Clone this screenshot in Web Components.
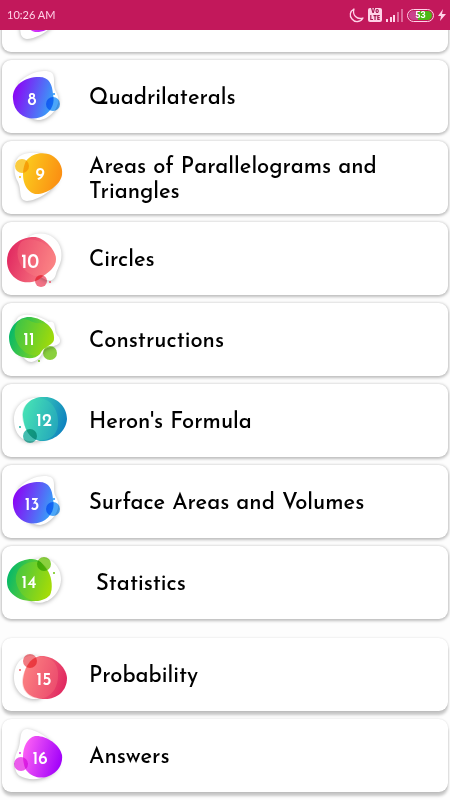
<!DOCTYPE html>
<html lang="en">
<head>
<meta charset="utf-8">
<meta name="viewport" content="width=device-width, initial-scale=1">
<title>Chapters</title>
<style>
    body {
        display: flex;
        flex-direction: column;
        height: 100vh;
        margin: 0;
        background: #fdfdfd;
        color: #000;
        font-family: "Josefin Sans", Lato, sans-serif;
    }
    main {
        flex: 1;
        min-height: 0;
        overflow: hidden auto;
        scrollbar-width: none;
    }
</style>
</head>
<body>
<status-bar><span slot="time">10:26 AM</span><span slot="battery">53</span></status-bar>

<main>
    <chapter-list>
        <chapter-card shape="low" tone="purple" number=""></chapter-card>
        <chapter-card shape="right" tone="blue" number="8">Quadrilaterals</chapter-card>
        <chapter-card shape="low" tone="orange" number="9">Areas of Parallelograms and Triangles</chapter-card>
        <chapter-card shape="wide" tone="red" number="10">Circles</chapter-card>
        <chapter-card shape="splash" tone="green" number="11">Constructions</chapter-card>
        <chapter-card shape="double" tone="teal" number="12">Heron's Formula</chapter-card>
        <chapter-card shape="right" tone="blue" number="13">Surface Areas and Volumes</chapter-card>
        <chapter-card shape="round" tone="green" number="14">&nbsp;Statistics</chapter-card>
    </chapter-list>
    <chapter-list raised>
        <chapter-card shape="doubleup" tone="rose" number="15">Probability</chapter-card>
        <chapter-card shape="high" tone="purple" number="16">Answers</chapter-card>
    </chapter-list>
</main>

<script>
// start / end of the gradient, bubble, dot
const TONES = {
    purple: ['#f95cf5', '#a000fa', '#e632e8'],
    blue: ['#8a08f5', '#35a3f8', '#1e90f8'],
    orange: ['#fbc91d', '#fb8d12', '#f9c010'],
    red: ['#e22c62', '#fb8585', '#ee5068'],
    green: ['#08b968', '#a5dc08', '#6cc40d'],
    teal: ['#45dfb5', '#0d80c0', '#16ac9c'],
    rose: ['#fb7f80', '#e02860', '#ee5a62']
};

// back: white blob, main: coloured blob, inner: lighter blob over it
const SHAPES = {
    right: {
        back: 'M17 23C25 13 43 8 50 13C54 17 50 26 54 32C62 45 48 59 38 60C25 60 16 48 17 23Z',
        main: 'M11 39C10 25 23 17 37 17C48 17 50 25 51 34C53 43 50 50 43 55C31 63 12 57 11 39Z',
        bubble: [51, 44, 7], dot: [52, 34], text: [30, 45]
    },
    low: {
        back: 'M18 15C28 9 50 11 56 26C61 48 34 60 25 60C16 59 20 50 16 41C11 33 11 20 18 15Z',
        main: 'M24 20C31 11 42 11 49 14C57 18 61 26 60 34C58 45 43 54 33 53C21 50 18 32 24 20Z',
        bubble: [20, 25, 7], dot: [18, 36], text: [38, 39]
    },
    high: {
        back: 'M18 57C28 63 50 61 56 46C61 24 34 10 25 10C16 11 20 22 16 31C11 39 11 52 18 57Z',
        main: 'M24 51C31 60 42 60 49 56C57 52 61 44 60 36C58 25 43 16 33 17C21 20 18 39 24 51Z',
        bubble: [19, 45, 7], dot: [18, 34], text: [38, 45]
    },
    wide: {
        back: 'M28 14C40 8 56 13 59 28C61 40 56 44 54 52C51 62 44 58 40 56C27 50 17 30 28 14Z',
        main: 'M5 39C5 24 19 15 32 15C42 15 54 28 54 37C54 45 47 50 41 54C35 61 23 62 16 58C9 54 5 47 5 39Z',
        inner: 'M19 20C30 11 53 25 54 37C54 45 47 50 41 54C25 58 8 36 19 20Z', tint: 1,
        bubble: [39, 59, 6], dot: [48, 60], text: [28, 46], size: 19
    },
    splash: {
        back: 'M15 16C20 8 38 13 47 19C56 17 50 29 57 34C62 44 48 42 42 47C38 57 30 62 24 57C12 47 9 26 15 16Z',
        main: 'M7 34C8 23 17 14 27 14C38 14 52 23 52 34C53 43 42 42 38 51C33 57 21 56 14 51C9 47 7 40 7 34Z',
        inner: 'M15 20C22 10 31 22 37 20C46 20 52 26 52 34C53 43 42 42 38 51C25 58 6 37 15 20Z', tint: 1,
        bubble: [48, 50, 7], dot: [37, 58], text: [27, 42]
    },
    double: {
        back: 'M12 35C12 22 23 13 35 14C48 17 52 50 40 55C28 61 12 56 12 35Z',
        main: 'M21 33C20 20 31 12 43 13C55 13 65 23 65 35C64 49 50 58 38 57C27 55 22 44 21 33Z',
        inner: 'M20 30C21 18 33 12 42 15C51 18 56 27 56 37C57 48 50 57 38 56C27 54 20 41 20 30Z', tint: 0,
        bubble: [28, 52, 7], dot: [18, 43], text: [42, 42], size: 18
    },
    doubleup: {
        back: 'M12 40C12 53 23 62 35 61C48 58 52 25 40 20C28 14 12 19 12 40Z',
        main: 'M21 42C20 55 31 61 43 61C55 61 65 53 65 40C64 27 50 17 38 18C27 20 22 31 21 42Z',
        inner: 'M20 45C21 57 33 63 42 60C51 57 56 48 56 38C57 27 50 18 38 19C27 21 20 34 20 45Z', tint: 0,
        bubble: [28, 23, 7], dot: [18, 32], text: [42, 47], size: 18
    },
    round: {
        back: 'M29 15C45 7 59 18 59 34C58 49 44 60 31 56C18 46 17 24 29 15Z',
        main: 'M5 36C5 22 17 13 30 13C40 13 43 22 46 25C50 32 51 43 48 49C41 57 27 56 18 53C10 49 5 44 5 36Z',
        inner: 'M17 23C24 14 42 12 46 25C50 32 51 43 48 49C36 58 26 55 19 47C13 38 12 30 17 23Z', tint: 1,
        bubble: [42, 18, 7], dot: [52, 27], text: [27, 42], size: 17
    }
};

class StatusBar extends HTMLElement {
    constructor() {
        super();
        this.attachShadow({ mode: 'open' });
        this.shadowRoot.innerHTML = `
            <style>
                :host {
                    display: flex;
                    align-items: center;
                    justify-content: space-between;
                    flex: none;
                    box-sizing: border-box;
                    height: 30px;
                    padding: 0 4px 0 7px;
                    background: #c2185b;
                    color: #ffd3e8;
                    font: 11px/14px Lato, sans-serif;
                }
                .icons {
                    display: flex;
                    align-items: center;
                    gap: 4px;
                }
                svg {
                    display: block;
                }
                .lte {
                    width: 14px;
                    border-radius: 2px;
                    background: #ffd3e8;
                    color: #a5154e;
                    font: bold 6px/7px "Open Sans", sans-serif;
                    text-align: center;
                }
                .lte b {
                    display: block;
                }
                .battery {
                    box-sizing: border-box;
                    width: 27px;
                    height: 13px;
                    border: 1px solid #ffd3e8;
                    border-radius: 7px;
                    padding: 1px;
                }
                .level {
                    border-radius: 5px;
                    background: linear-gradient(90deg, #c9418c 0 40%, #4cb814 40%);
                    color: #fff;
                    font: bold 9px/9px Roboto, sans-serif;
                    text-align: center;
                }
            </style>
            <slot name="time"></slot>
            <div class="icons">
                <svg width="15" height="15" viewBox="0 0 15 15" fill="none" stroke="#ffd3e8" stroke-width="1.3" stroke-linejoin="round">
                    <path d="M5 1C1 3 0 8 3 11C6 15 12 14 14 10C8 12 3 7 5 1Z"/>
                </svg>
                <div class="lte"><b>Vo</b><b>LTE</b></div>
                <svg width="17" height="13" viewBox="0 0 17 13" fill="#ffd3e8">
                    <path d="M0 10h2v3H0zM4 8h2v5H4zM7 6h2v7H7z"/>
                    <path d="M11 3h2v10h-2zM15 0h2v13h-2z" opacity=".45"/>
                </svg>
                <div class="battery"><div class="level"><slot name="battery"></slot></div></div>
                <svg width="8" height="12" viewBox="0 0 8 12" fill="#ffd3e8">
                    <path d="M5 0L0 7H3L2 12L8 5H4Z"/>
                </svg>
            </div>
        `;
    }
}

class ChapterList extends HTMLElement {
    constructor() {
        super();
        this.attachShadow({ mode: 'open' });
        this.shadowRoot.innerHTML = `
            <style>
                :host {
                    display: grid;
                    gap: 8px;
                    padding: 0 2px;
                    --card-shadow: 0 1px 3px 1px rgba(0, 0, 0, .25);
                }
                :host([raised]) {
                    padding: 19px 2px 16px;
                    --card-shadow: 0 4px 3px rgba(0, 0, 0, .22), 0 0 2px rgba(0, 0, 0, .15);
                }
            </style>
            <slot></slot>
        `;
    }
}

class ChapterCard extends HTMLElement {
    constructor() {
        super();
        this.attachShadow({ mode: 'open' });
        this.shadowRoot.innerHTML = `
            <style>
                :host {
                    display: block;
                    border-radius: 9px;
                    background: #fff;
                    box-shadow: var(--card-shadow);
                }
                a {
                    display: flex;
                    align-items: center;
                    gap: 21px;
                    min-height: 73px;
                    color: inherit;
                    text-decoration: none;
                }
                chapter-badge {
                    flex: none;
                }
                .title {
                    padding: 4px 48px 0 0;
                    font-size: 22px;
                    font-weight: 500;
                    line-height: 25px;
                }
            </style>
            <a href="#">
                <chapter-badge></chapter-badge>
                <span class="title"><slot></slot></span>
            </a>
        `;
    }

    connectedCallback() {
        const badge = this.shadowRoot.querySelector('chapter-badge');
        this.shadowRoot.querySelector('a').href = '#chapter-' + this.getAttribute('number');
        ['shape', 'tone', 'number'].forEach(name => badge.setAttribute(name, this.getAttribute(name)));
    }
}

class ChapterBadge extends HTMLElement {
    constructor() {
        super();
        this.attachShadow({ mode: 'open' });
    }

    static get observedAttributes() {
        return ['shape', 'tone', 'number'];
    }

    attributeChangedCallback() {
        const s = SHAPES[this.getAttribute('shape')];
        const t = TONES[this.getAttribute('tone')];
        if (!s || !t || !this.hasAttribute('number')) return;

        this.shadowRoot.innerHTML = `
            <style>
                :host {
                    display: block;
                }
                svg {
                    display: block;
                }
                .back {
                    filter: drop-shadow(0 1px 2px rgba(0, 0, 0, .3));
                }
                .bubble {
                    mix-blend-mode: multiply;
                }
                text {
                    font-weight: 600;
                }
            </style>
            <svg width="66" height="73" viewBox="0 0 66 73">
                <defs>
                    <linearGradient id="fill" x1="0" y1=".3" x2="1" y2=".6">
                        <stop offset=".05" stop-color="${t[0]}"/>
                        <stop offset="1" stop-color="${t[1]}"/>
                    </linearGradient>
                </defs>
                <path class="back" d="${s.back}" fill="#fff"/>
                <path d="${s.main}" fill="url(#fill)"/>
                ${s.inner ? `<path d="${s.inner}" fill="${t[s.tint]}" opacity=".3"/>` : ''}
                <circle class="bubble" cx="${s.bubble[0]}" cy="${s.bubble[1]}" r="${s.bubble[2]}" fill="${t[2]}" opacity=".8"/>
                <circle cx="${s.dot[0]}" cy="${s.dot[1]}" r="1" fill="${t[2]}"/>
                <text x="${s.text[0]}" y="${s.text[1]}" font-size="${s.size || 17}" text-anchor="middle" fill="#fff">${this.getAttribute('number')}</text>
            </svg>
        `;
    }
}

customElements.define('status-bar', StatusBar);
customElements.define('chapter-list', ChapterList);
customElements.define('chapter-badge', ChapterBadge);
customElements.define('chapter-card', ChapterCard);

document.querySelector('main').scrollTop = 51;
</script>
</body>
</html>
